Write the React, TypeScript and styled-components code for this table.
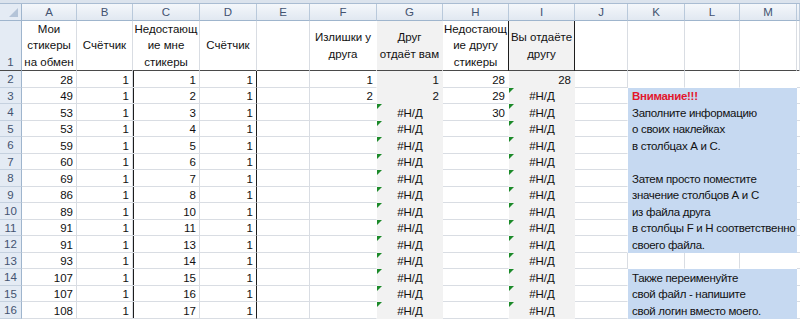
import React from "react";
import styled, { createGlobalStyle } from "styled-components";

const GRID_LINE = "#d9dde3";
const GREY = "#f2f2f2";
const BLUE = "#c6d9f1";
const DARK = "#1e1e1e";
const COLS = "22px 55px 56px 67px 57px 53px 67px 66px 66px 66px 53px 57px 55px 57px 1fr";
const LETTERS = ["A", "B", "C", "D", "E", "F", "G", "H", "I", "J", "K", "L", "M"];

const GlobalStyle = createGlobalStyle`
  body {
    margin: 0;
    background: #fff;
    font-family: "Liberation Sans", Arial, sans-serif;
    font-size: 11.5px;
    color: #000;
  }
`;

const Sheet = styled.div`
  width: 800px;
  height: 319px;
  overflow: hidden;
  display: flex;
  flex-direction: column;
`;

const TopStrip = styled.div`
  height: 3px;
  flex: none;
  background: #dbe3ed;
  border-bottom: 1px solid #a9bcd2;
`;

const Row = styled.div<{ $h: number }>`
  display: grid;
  grid-template-columns: ${COLS};
  height: ${(p) => p.$h}px;
  flex: none;
`;

const Corner = styled.div`
  box-sizing: border-box;
  background: #e4ebf4;
  border-right: 1px solid #9fb5cd;
  border-bottom: 1px solid #9fb5cd;
  display: flex;
  align-items: flex-end;
  justify-content: flex-end;
  padding: 0 3px 3px 0;
`;

const ColHead = styled.div`
  box-sizing: border-box;
  background: linear-gradient(#f4f7fb, #e1e8f1);
  border-right: 1px solid #b9c9db;
  border-bottom: 1px solid #9fb5cd;
  display: flex;
  align-items: center;
  justify-content: center;
  color: #435370;
`;

const RowHead = styled.div<{ $top?: boolean }>`
  box-sizing: border-box;
  background: #e4ebf4;
  border-right: 1px solid #9fb5cd;
  border-bottom: ${(p) => (p.$top ? `2px solid #4a4a4a` : `1px solid #c5d1df`)};
  display: flex;
  align-items: ${(p) => (p.$top ? "flex-end" : "center")};
  justify-content: center;
  padding-bottom: ${(p) => (p.$top ? 2 : 0)}px;
  color: #435370;
`;

type Align = "left" | "right" | "center";

type CellProps = {
  $align?: Align;
  $fill?: string;
  $noR?: boolean;
  $noB?: boolean;
  $darkL?: boolean;
  $darkR?: boolean;
  $tri?: boolean;
  $span?: number;
  $red?: boolean;
};

const justify = (a?: Align) => (a === "right" ? "flex-end" : a === "center" ? "center" : "flex-start");

const Cell = styled.div<CellProps>`
  position: relative;
  box-sizing: border-box;
  display: flex;
  align-items: center;
  justify-content: ${(p) => justify(p.$align)};
  padding: 1px 3px 0 4px;
  background: ${(p) => p.$fill ?? "#fff"};
  border-right: 1px solid ${(p) => (p.$darkR ? DARK : p.$noR ? "transparent" : GRID_LINE)};
  border-bottom: 1px solid ${(p) => (p.$noB ? "transparent" : GRID_LINE)};
  box-shadow: ${(p) => (p.$darkL ? `inset 1px 0 0 ${DARK}` : "none")};
  grid-column: span ${(p) => p.$span ?? 1};
  white-space: nowrap;
  color: ${(p) => (p.$red ? "#e3172d" : "#111")};
  font-weight: ${(p) => (p.$red ? 700 : 400)};

  &::before {
    content: "";
    display: ${(p) => (p.$tri ? "block" : "none")};
    position: absolute;
    left: 0;
    top: 0;
    border-top: 5px solid #1c8a2a;
    border-right: 5px solid transparent;
  }
`;

const NoteCell = styled(Cell)`
  letter-spacing: -0.3px;
  padding-left: 4px;
`;

const TitleCell = styled.div<{ $fill?: string; $darkL?: boolean; $darkR?: boolean; $noR?: boolean }>`
  box-sizing: border-box;
  display: flex;
  flex-direction: column;
  align-items: center;
  justify-content: center;
  text-align: center;
  line-height: 16.4px;
  background: ${(p) => p.$fill ?? "#fff"};
  border-right: 1px solid ${(p) => (p.$darkR ? DARK : p.$noR ? "transparent" : GRID_LINE)};
  border-bottom: 2px solid #4a4a4a;
  box-shadow: ${(p) => (p.$darkL ? `inset 1px 0 0 ${DARK}` : "none")};
  white-space: nowrap;
  color: #111;
`;

const A = [28, 49, 53, 53, 59, 60, 69, 86, 89, 91, 91, 93, 107, 107, 108];
const C = [1, 2, 3, 4, 5, 6, 7, 8, 10, 11, 13, 14, 15, 16, 17];
const F: Record<number, string> = { 2: "1", 3: "2" };
const G: Record<number, string> = { 2: "1", 3: "2" };
const H: Record<number, string> = { 2: "28", 3: "29", 4: "30" };

const NOTES: Record<number, string> = {
  3: "Внимание!!!",
  4: "Заполните информацию",
  5: "о своих наклейках",
  6: "в столбцах А и С.",
  7: "",
  8: "Затем просто поместите",
  9: "значение столбцов А и С",
  10: "из файла друга",
  11: "в столбцы F и H соответственно",
  12: "своего файла.",
  14: "Также переименуйте",
  15: "свой файл - напишите",
  16: "свой логин вместо моего.",
};

const NA = "#Н/Д";

const Corner3 = () => (
  <svg width="9" height="9" viewBox="0 0 9 9">
    <polygon points="9,0 9,9 0,9" fill="#b4c4d8" />
  </svg>
);

function DataRow({ r, h }: { r: number; h: number }) {
  const i = r - 2;
  const blue = r in NOTES;
  const blueNext = r + 1 in NOTES;
  const gVal = G[r] ?? NA;
  const iVal = r === 2 ? "28" : NA;
  return (
    <Row $h={h}>
      <RowHead>{r}</RowHead>
      <Cell $align="right">{A[i]}</Cell>
      <Cell $align="right">{1}</Cell>
      <Cell $align="right" $darkL>
        {C[i]}
      </Cell>
      <Cell $align="right" $darkR>
        {1}
      </Cell>
      <Cell />
      <Cell $align="right" $noR>
        {F[r]}
      </Cell>
      <Cell $align={G[r] ? "right" : "center"} $fill={GREY} $noR $noB $tri={!G[r]}>
        {gVal}
      </Cell>
      <Cell $align="right" $noR>
        {H[r]}
      </Cell>
      <Cell $align={r === 2 ? "right" : "center"} $fill={GREY} $noR $noB $tri={r !== 2}>
        {iVal}
      </Cell>
      <Cell $noR={blue} />
      {blue ? (
        <NoteCell $span={3} $fill={BLUE} $noR $noB $red={r === 3}>
          {NOTES[r]}
        </NoteCell>
      ) : (
        <>
          <Cell $noB={blueNext} />
          <Cell $noB={blueNext} />
          <Cell $noR $noB={blueNext} />
        </>
      )}
      <Cell />
    </Row>
  );
}

export default function App() {
  const rows = Array.from({ length: 15 }, (_, k) => k + 2);
  return (
    <>
      <GlobalStyle />
      <Sheet>
        <TopStrip />
        <Row $h={17}>
          <Corner>
            <Corner3 />
          </Corner>
          {LETTERS.map((l) => (
            <ColHead key={l}>{l}</ColHead>
          ))}
          <ColHead />
        </Row>
        <Row $h={50}>
          <RowHead $top>1</RowHead>
          <TitleCell>
            <span>Мои</span>
            <span>стикеры</span>
            <span>на обмен</span>
          </TitleCell>
          <TitleCell>Счётчик</TitleCell>
          <TitleCell>
            <span>Недостающ</span>
            <span>ие мне</span>
            <span>стикеры</span>
          </TitleCell>
          <TitleCell>Счётчик</TitleCell>
          <TitleCell />
          <TitleCell $noR>
            <span>Излишки у</span>
            <span>друга</span>
          </TitleCell>
          <TitleCell $fill={GREY} $noR>
            <span>Друг</span>
            <span>отдаёт вам</span>
          </TitleCell>
          <TitleCell $darkR>
            <span>Недостающ</span>
            <span>ие другу</span>
            <span>стикеры</span>
          </TitleCell>
          <TitleCell $fill={GREY} $darkR>
            <span>Вы отдаёте</span>
            <span>другу</span>
          </TitleCell>
          <TitleCell />
          <TitleCell />
          <TitleCell />
          <TitleCell />
          <TitleCell />
        </Row>
        {rows.map((r, k) => (
          <DataRow key={r} r={r} h={k % 2 === 0 ? 17 : 16} />
        ))}
      </Sheet>
    </>
  );
}
